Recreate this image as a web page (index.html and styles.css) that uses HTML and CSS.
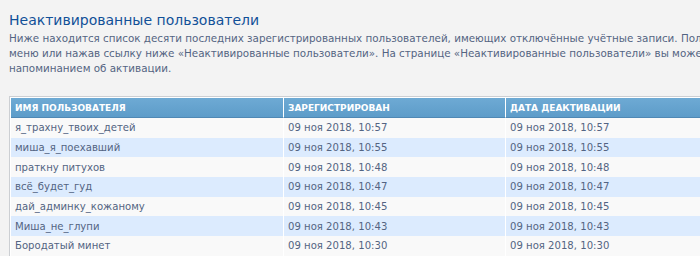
FILE: index.html
```html
<!DOCTYPE html>
<html lang="ru">
<head>
    <meta charset="UTF-8">
    <title>Неактивированные пользователи</title>
    <link rel="stylesheet" href="styles.css">
</head>
<body>
<div class="main">
    <h1>Неактивированные пользователи</h1>
    <p class="explain">Ниже находится список десяти последних зарегистрированных пользователей, имеющих отключённые учётные записи. Полный список можно увидеть, выбрав соответствующий пункт меню или нажав ссылку ниже «Неактивированные пользователи». На странице «Неактивированные пользователи» вы можете активировать, удалить или отправить письмо с напоминанием об активации.</p>

    <table class="inactive">
        <thead>
            <tr>
                <th class="col-name">Имя пользователя</th>
                <th class="col-date">Зарегистрирован</th>
                <th>Дата деактивации</th>
            </tr>
        </thead>
        <tbody>
            <tr class="row1"><td>я_трахну_твоих_детей</td><td>09 ноя 2018, 10:57</td><td>09 ноя 2018, 10:57</td></tr>
            <tr class="row2"><td>миша_я_поехавший</td><td>09 ноя 2018, 10:55</td><td>09 ноя 2018, 10:55</td></tr>
            <tr class="row1"><td>праткну питухов</td><td>09 ноя 2018, 10:48</td><td>09 ноя 2018, 10:48</td></tr>
            <tr class="row2"><td>всё_будет_гуд</td><td>09 ноя 2018, 10:47</td><td>09 ноя 2018, 10:47</td></tr>
            <tr class="row1"><td>дай_админку_кожаному</td><td>09 ноя 2018, 10:45</td><td>09 ноя 2018, 10:45</td></tr>
            <tr class="row2"><td>Миша_не_глупи</td><td>09 ноя 2018, 10:43</td><td>09 ноя 2018, 10:43</td></tr>
            <tr class="row1"><td>Бородатый минет</td><td>09 ноя 2018, 10:30</td><td>09 ноя 2018, 10:30</td></tr>
        </tbody>
    </table>
</div>
</body>
</html>
```

FILE: styles.css
```css
body {
    font-family: Verdana, "DejaVu Sans", sans-serif;
    background-color: #f3f3f3;
    color: #536482;
    margin: 0;
    padding: 0;
    overflow: hidden;
}
.main {
    width: 1045px;
    padding: 10px 0 0 9px;
}
h1 {
    font-size: 14px;
    font-weight: normal;
    color: #115098;
    margin: 0;
    line-height: 20px;
}
.explain {
    font-size: 10.35px;
    line-height: 15px;
    margin: 1px 0 20px 0;
}
table.inactive {
    width: 940px;
    border: 1px solid #cccfd3;
    background: #fff;
    padding: 1px;
    border-spacing: 0;
    font-size: 10.1px;
}
.inactive th {
    background: linear-gradient(to bottom, #6eaad4, #5d9cc9);
    border-bottom: 1px solid #4f88b4;
    border-left: 1px solid #fff;
    color: #fff;
    font-size: 9px;
    font-weight: bold;
    text-transform: uppercase;
    text-align: left;
    padding: 0 4px;
    height: 19px;
}
.inactive th:first-child,
.inactive td:first-child {
    border-left: none;
}
.col-name {
    width: 264px;
}
.col-date {
    width: 213px;
}
.inactive td {
    border-left: 1px solid #fff;
    padding: 0 4px;
    height: 19.7px;
    line-height: 19px;
    white-space: nowrap;
}
.row1 {
    background-color: #f9f9f9;
}
.row2 {
    background-color: #dcebfe;
}
```
